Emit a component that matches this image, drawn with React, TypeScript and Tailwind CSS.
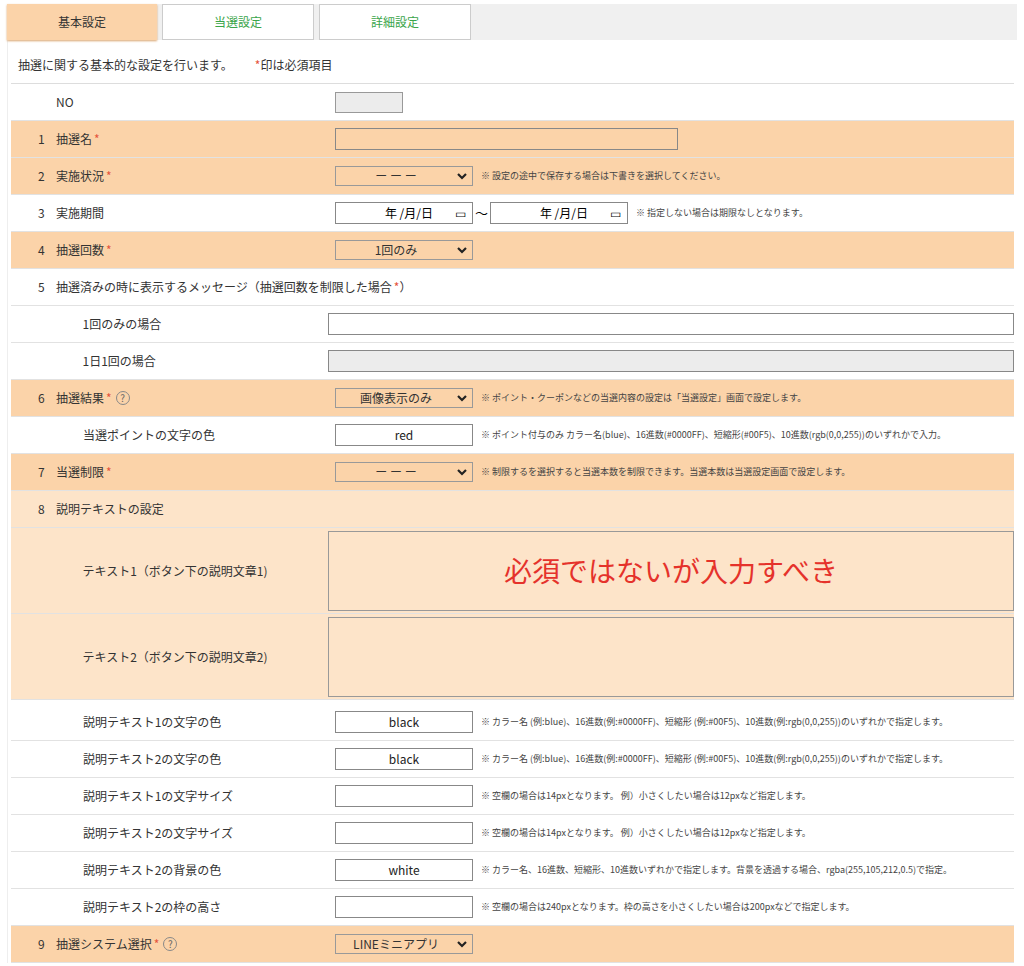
import React from 'react';

const OR = 'bg-[#fbd3a9]';
const LT = 'bg-[#fde4c9]';

const Req = () => <span className="text-[#e5533b] ml-0.5">*</span>;
const Help = () => (
  <span className="inline-flex items-center justify-center w-[14px] h-[14px] rounded-full border border-[#888] text-[10px] text-[#666] ml-1 leading-none">?</span>
);

const Note: React.FC<{ children: React.ReactNode }> = ({ children }) => (
  <span className="text-[9px] text-[#444] ml-2 whitespace-nowrap">※ {children}</span>
);

const Select: React.FC<{ value: string; w?: string }> = ({ value, w = 'w-[138px]' }) => (
  <div className={`${w} h-[20px] border border-[#999] bg-transparent flex items-center text-[12px] text-[#333]`}>
    <span className="flex-1 text-center">{value}</span>
    <svg width="12" height="12" viewBox="0 0 12 12" className="mr-1"><path d="M2 4l4 4 4-4" stroke="#222" strokeWidth="2.2" fill="none" /></svg>
  </div>
);

const Text: React.FC<{ value?: string; w?: string; bg?: string }> = ({ value = '', w = 'w-[138px]', bg = 'bg-white' }) => (
  <div className={`${w} h-[22px] border border-[#888] ${bg} flex items-center justify-center text-[12px] text-[#222]`}>{value}</div>
);

const Row: React.FC<{ n?: string; label: React.ReactNode; indent?: boolean; bg?: string; h?: string; children?: React.ReactNode }> = ({ n, label, indent, bg = 'bg-white', h = 'h-[37px]', children }) => (
  <div className={`flex items-center ${h} ${bg} border-b border-[#e2e2e2]`}>
    <div className="w-[45px] pl-[27px] text-[12px] text-[#333]">{n}</div>
    <div className={`w-[279px] text-[12px] text-[#333] flex items-center ${indent ? 'pl-[27px]' : ''}`}>{label}</div>
    <div className="flex-1 flex items-center">{children}</div>
  </div>
);

export default function App() {
  return (
    <div className="w-[1024px] h-[966px] bg-white pt-[4px] px-[7px]" style={{ fontFamily: '"Noto Sans CJK JP", "Noto Sans", sans-serif' }}>
      <div className="flex h-[36px] items-stretch gap-[5px] bg-[#f0f0f0]">
        <div className={`w-[150px] ${OR} flex items-center justify-center text-[12px] text-[#333] shadow-[0_1px_2px_#d9a46e]`}>基本設定</div>
        <div className="w-[152px] bg-white border border-[#ccc] flex items-center justify-center text-[12px] text-[#3aa54a]">当選設定</div>
        <div className="w-[152px] bg-white border border-[#ccc] flex items-center justify-center text-[12px] text-[#3aa54a]">詳細設定</div>
        <div className="flex-1" />
      </div>
      <div className="px-[3px] pt-[7px] border-l border-[#eee]">
        <div className="h-[37px] flex items-center pl-[7px] text-[12px] text-[#333] border-b border-[#ddd]">
          抽選に関する基本的な設定を行います。<span className="ml-[22px] text-[#e5533b]">*</span>印は必須項目
        </div>
        <Row label="NO"><div className="w-[68px] h-[21px] bg-[#ececec] border border-[#999]" /></Row>
        <Row n="1" label={<>抽選名<Req /></>} bg={OR}><Text w="w-[343px]" bg="bg-transparent" /></Row>
        <Row n="2" label={<>実施状況<Req /></>} bg={OR}><Select value="ー ー ー" /><Note>設定の途中で保存する場合は下書きを選択してください。</Note></Row>
        <Row n="3" label="実施期間">
          <div className="w-[138px] h-[22px] border border-[#888] flex items-center justify-end pr-[6px] text-[12px] gap-[22px]"><span>年 /月/日</span><span>▭</span></div>
          <span className="mx-[2px] text-[13px]">〜</span>
          <div className="w-[138px] h-[22px] border border-[#888] flex items-center justify-end pr-[6px] text-[12px] gap-[22px]"><span>年 /月/日</span><span>▭</span></div>
          <Note>指定しない場合は期限なしとなります。</Note>
        </Row>
        <Row n="4" label={<>抽選回数<Req /></>} bg={OR}><Select value="1回のみ" /></Row>
        <Row n="5" label={<span className="whitespace-nowrap">抽選済みの時に表示するメッセージ（抽選回数を制限した場合<Req />）</span>} />
        <Row indent label="1回のみの場合"><Text w="w-[686px]" /></Row>
        <Row indent label="1日1回の場合"><Text w="w-[686px]" bg="bg-[#ececec]" /></Row>
        <Row n="6" label={<>抽選結果<Req /><Help /></>} bg={OR}><Select value="画像表示のみ" /><Note>ポイント・クーポンなどの当選内容の設定は「当選設定」画面で設定します。</Note></Row>
        <Row indent label="当選ポイントの文字の色"><Text value="red" /><Note>ポイント付与のみ カラー名(blue)、16進数(#0000FF)、短縮形(#00F5)、10進数(rgb(0,0,255))のいずれかで入力。</Note></Row>
        <Row n="7" label={<>当選制限<Req /></>} bg={OR}><Select value="ー ー ー" /><Note>制限するを選択すると当選本数を制限できます。当選本数は当選設定画面で設定します。</Note></Row>
        <Row n="8" label="説明テキストの設定" bg={LT} />
        <Row indent label="テキスト1（ボタン下の説明文章1)" bg={LT} h="h-[86px]">
          <div className="w-[686px] h-[80px] border border-[#999] flex items-center justify-center text-[28px] text-[#e5322b] pb-[2px]">必須ではないが入力すべき</div>
        </Row>
        <Row indent label="テキスト2（ボタン下の説明文章2)" bg={LT} h="h-[86px]">
          <div className="w-[686px] h-[80px] border border-[#999]" />
        </Row>
        <div className="h-[4px]" />
        <Row indent label="説明テキスト1の文字の色"><Text value="black" /><Note>カラー名 (例:blue)、16進数(例:#0000FF)、短縮形 (例:#00F5)、10進数(例:rgb(0,0,255))のいずれかで指定します。</Note></Row>
        <Row indent label="説明テキスト2の文字の色"><Text value="black" /><Note>カラー名 (例:blue)、16進数(例:#0000FF)、短縮形 (例:#00F5)、10進数(例:rgb(0,0,255))のいずれかで指定します。</Note></Row>
        <Row indent label="説明テキスト1の文字サイズ"><Text /><Note>空欄の場合は14pxとなります。 例）小さくしたい場合は12pxなど指定します。</Note></Row>
        <Row indent label="説明テキスト2の文字サイズ"><Text /><Note>空欄の場合は14pxとなります。 例）小さくしたい場合は12pxなど指定します。</Note></Row>
        <Row indent label="説明テキスト2の背景の色"><Text value="white" /><Note>カラー名、16進数、短縮形、10進数いずれかで指定します。背景を透過する場合、rgba(255,105,212,0.5)で指定。</Note></Row>
        <Row indent label="説明テキスト2の枠の高さ"><Text /><Note>空欄の場合は240pxとなります。枠の高さを小さくしたい場合は200pxなどで指定します。</Note></Row>
        <Row n="9" label={<>抽選システム選択<Req /><Help /></>} bg={OR}><Select value="LINEミニアプリ" /></Row>
      </div>
    </div>
  );
}
